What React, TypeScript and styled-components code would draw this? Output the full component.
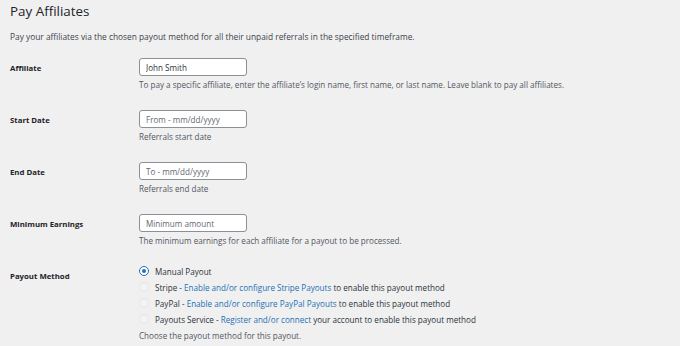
import React from "react";
import styled, { createGlobalStyle } from "styled-components";

const GlobalStyle = createGlobalStyle`
  html, body {
    margin: 0;
    padding: 0;
    background: #f0f0f1;
  }
  body {
    font-family: "Open Sans", "Noto Sans", sans-serif;
    color: #3c434a;
  }
`;

const Page = styled.div`
  padding: 0 10px;
  width: 660px;
`;

const Title = styled.h1`
  margin: 0;
  padding-top: 1px;
  font-size: 13.4px;
  line-height: 20px;
  font-weight: 400;
  color: #1d2327;
`;

const Description = styled.p`
  margin: 10px 0 0;
  font-size: 8.35px;
  line-height: 12px;
  color: #3c434a;
`;

const FormTable = styled.div`
  margin-top: 7px;
  display: flex;
  flex-direction: column;
`;

const Row = styled.div<{ tall?: boolean }>`
  display: grid;
  grid-template-columns: 129px 1fr;
  height: ${({ tall }) => (tall ? "auto" : "52px")};
`;

const Label = styled.label<{ offset: number }>`
  padding-top: ${({ offset }) => offset}px;
  font-size: 7.8px;
  line-height: 12px;
  font-weight: 700;
  color: #1d2327;
`;

const Field = styled.div<{ offset: number }>`
  padding-top: ${({ offset }) => offset}px;
  display: flex;
  flex-direction: column;
  align-items: flex-start;
`;

const Input = styled.input`
  box-sizing: border-box;
  width: 108px;
  height: 18px;
  padding: 0 6px;
  border: 1px solid #8c8f94;
  border-radius: 3px;
  background: #fff;
  font-family: inherit;
  font-size: 8.1px;
  color: #2c3338;
  outline: none;

  &::placeholder {
    color: #646970;
    opacity: 1;
  }
`;

const Help = styled.p`
  margin: 3px 0 0;
  font-size: 8.1px;
  line-height: 12px;
  color: #50575e;
`;

const RadioList = styled.div`
  display: flex;
  flex-direction: column;
`;

const RadioRow = styled.div`
  display: flex;
  align-items: center;
  gap: 6px;
  height: 16px;
  font-size: 8.1px;
  color: #2c3338;
`;

const Radio = styled.span<{ checked?: boolean }>`
  box-sizing: border-box;
  width: 10px;
  height: 10px;
  border-radius: 50%;
  flex-shrink: 0;
  display: flex;
  align-items: center;
  justify-content: center;
  border: 1px solid ${({ checked }) => (checked ? "#2271b1" : "#e6e6e7")};
  background: ${({ checked }) => (checked ? "#fff" : "#f3f3f4")};

  &::after {
    content: "";
    display: ${({ checked }) => (checked ? "block" : "none")};
    width: 4px;
    height: 4px;
    border-radius: 50%;
    background: #2271b1;
  }
`;

const Link = styled.a`
  color: #2271b1;
  text-decoration: none;
`;

const textFields = [
  {
    label: "Affiliate",
    value: "John Smith",
    placeholder: "",
    help: "To pay a specific affiliate, enter the affiliate\u2019s login name, first name, or last name. Leave blank to pay all affiliates.",
  },
  {
    label: "Start Date",
    value: "",
    placeholder: "From - mm/dd/yyyy",
    help: "Referrals start date",
  },
  {
    label: "End Date",
    value: "",
    placeholder: "To - mm/dd/yyyy",
    help: "Referrals end date",
  },
  {
    label: "Minimum Earnings",
    value: "",
    placeholder: "Minimum amount",
    help: "The minimum earnings for each affiliate for a payout to be processed.",
  },
];

const App: React.FC = () => {
  return (
    <>
      <GlobalStyle />
      <Page>
        <Title>Pay Affiliates</Title>
        <Description>
          Pay your affiliates via the chosen payout method for all their unpaid
          referrals in the specified timeframe.
        </Description>

        <FormTable>
          {textFields.map((f) => (
            <Row key={f.label}>
              <Label offset={12}>{f.label}</Label>
              <Field offset={8}>
                <Input
                  type="text"
                  defaultValue={f.value}
                  placeholder={f.placeholder}
                />
                <Help>{f.help}</Help>
              </Field>
            </Row>
          ))}

          <Row tall>
            <Label offset={12}>Payout Method</Label>
            <Field offset={5}>
              <RadioList>
                <RadioRow>
                  <Radio checked />
                  Manual Payout
                </RadioRow>
                <RadioRow>
                  <Radio />
                  <span>
                    Stripe -{" "}
                    <Link href="#">Enable and/or configure Stripe Payouts</Link>{" "}
                    to enable this payout method
                  </span>
                </RadioRow>
                <RadioRow>
                  <Radio />
                  <span>
                    PayPal -{" "}
                    <Link href="#">Enable and/or configure PayPal Payouts</Link>{" "}
                    to enable this payout method
                  </span>
                </RadioRow>
                <RadioRow>
                  <Radio />
                  <span>
                    Payouts Service -{" "}
                    <Link href="#">Register and/or connect</Link> your account
                    to enable this payout method
                  </span>
                </RadioRow>
              </RadioList>
              <Help>Choose the payout method for this payout.</Help>
            </Field>
          </Row>
        </FormTable>
      </Page>
    </>
  );
};

export default App;
